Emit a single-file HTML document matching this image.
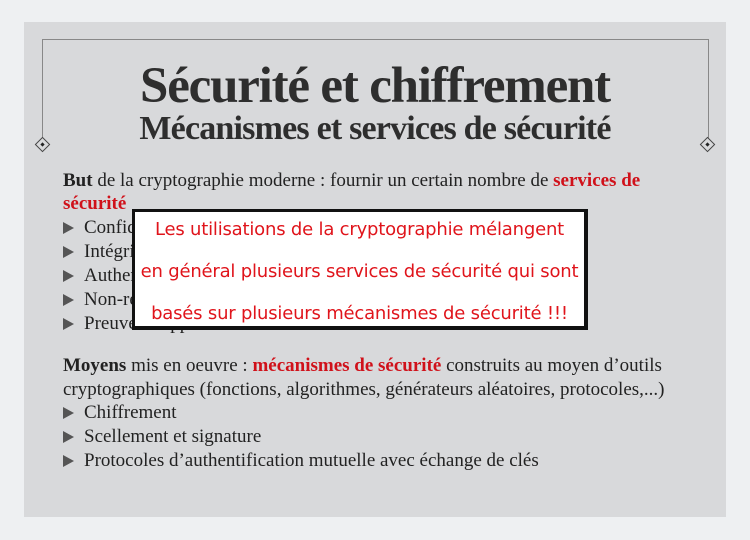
<!DOCTYPE html><html><head><meta charset="utf-8"><style>
body{margin:0;width:750px;height:540px;background:#eef0f2;position:relative;overflow:hidden;font-family:"Liberation Serif",serif;color:#222}
.slide{position:absolute;left:24px;top:22px;width:702px;height:495px;background:#d8d9db}
.frame{position:absolute;left:42px;top:39px;width:665px;height:104px;border:1px solid #888;border-bottom:none}
.dia{position:absolute;width:9px;height:9px;border:1px solid #444;transform:rotate(45deg);background:#d8d9db}
.dia:after{content:"";position:absolute;left:3px;top:3px;width:3px;height:3px;background:#222}
.t{position:absolute;white-space:nowrap}
.ti{left:0;width:750px;text-align:center;font-weight:bold;color:#2e2e2e}
.line{position:absolute;left:63px;font-size:19px;white-space:nowrap;color:#222}
.b{left:63px}
.b:before{content:"";display:inline-block;width:0;height:0;border-left:11px solid #555;border-top:6px solid transparent;border-bottom:6px solid transparent;margin-right:10px;vertical-align:-1px}
.r{color:#d0111a;font-weight:bold}
.box{position:absolute;left:132px;top:209px;width:449px;height:114px;background:#fff;border:3px solid #111;border-right-width:4px;border-bottom-width:4px;font-family:"DejaVu Sans","Liberation Sans",sans-serif;color:#e0141b;font-size:18px;text-align:center}
.box div{position:absolute;left:0;width:100%;letter-spacing:-0.2px}
</style></head><body>
<div class="slide"></div>
<div class="frame"></div>
<div class="dia" style="left:37px;top:139px"></div>
<div class="dia" style="left:702px;top:139px"></div>
<div class="t ti" style="top:57px;font-size:51px;letter-spacing:-1.2px">Sécurité et chiffrement</div>
<div class="t ti" style="top:110px;font-size:34px;letter-spacing:-0.8px">Mécanismes et services de sécurité</div>
<div class="line" style="top:170px"><b>But</b> de la cryptographie moderne : fournir un certain nombre de <span class="r">services de</span></div>
<div class="line" style="top:193px"><span class="r">sécurité</span></div>
<div class="line b" style="top:217px">Confidentialité</div>
<div class="line b" style="top:241px">Intégrité</div>
<div class="line b" style="top:265px">Authentification</div>
<div class="line b" style="top:289px">Non-répudiation</div>
<div class="line b" style="top:313px">Preuves d'apport nul de connaissance</div>
<div class="line" style="top:355px"><b>Moyens</b> mis en oeuvre : <span class="r">mécanismes de sécurité</span> construits au moyen d’outils</div>
<div class="line" style="top:379px">cryptographiques (fonctions, algorithmes, générateurs aléatoires, protocoles,...)</div>
<div class="line b" style="top:402px">Chiffrement</div>
<div class="line b" style="top:426px">Scellement et signature</div>
<div class="line b" style="top:450px">Protocoles d’authentification mutuelle avec échange de clés</div>
<div class="box">
<div style="top:7px">Les utilisations de la cryptographie mélangent</div>
<div style="top:49px">en général plusieurs services de sécurité qui sont</div>
<div style="top:91px">basés sur plusieurs mécanismes de sécurité !!!</div>
</div>
</body></html>
